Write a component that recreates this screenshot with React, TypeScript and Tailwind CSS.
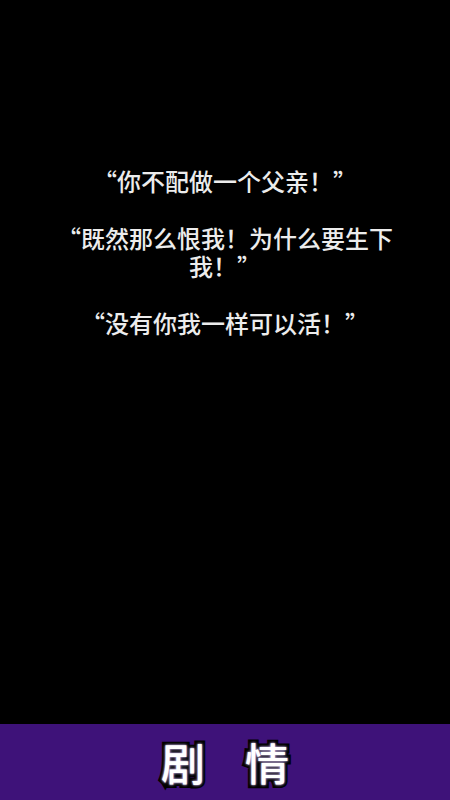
import React from 'react';

const LINES = [
  ['“你不配做一个父亲！”'],
  ['“既然那么恨我！为什么要生下我！”'],
  ['“没有你我一样可以活！”'],
];

const cjk = "font-['Noto_Sans_CJK_SC','Noto_Sans',sans-serif]";

export default function App() {
  return (
    <div className={`flex h-[800px] w-[450px] flex-col bg-black ${cjk}`}>
      <div className="flex flex-1 flex-col items-center pt-[167px]">
        <div className="flex w-[340px] flex-col gap-[29px] text-center text-[24px] font-medium leading-[28px] text-[#ececec]">
          {LINES.map((l) => (
            <p key={l[0]}>{l[0]}</p>
          ))}
        </div>
      </div>
      <div className="flex h-[76px] items-center justify-center gap-[40px] bg-[#3e1279]">
        {['剧', '情'].map((c) => (
          <span
            key={c}
            className="text-[44px] font-medium leading-none text-white [-webkit-text-stroke:7px_#000] [paint-order:stroke_fill] [text-shadow:0_0_2px_#b9a6d8,0_0_3px_#b9a6d8]"
          >
            {c}
          </span>
        ))}
      </div>
    </div>
  );
}
